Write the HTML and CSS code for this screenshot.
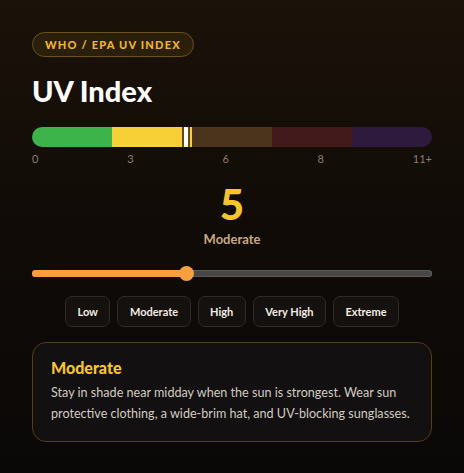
FILE: index.html
```html
<!DOCTYPE html>
<html lang="en">
<head>
    <meta charset="UTF-8">
    <meta name="viewport" content="width=device-width, initial-scale=1.0">
    <title>UV Index</title>
    <link rel="stylesheet" href="styles.css">
</head>
<body>
    <div class="panel">
        <span class="badge">WHO / EPA UV Index</span>
        <h1 class="title">UV Index</h1>

        <div class="scale">
            <div class="band low"></div>
            <div class="band moderate"></div>
            <div class="band high"></div>
            <div class="band veryHigh"></div>
            <div class="band extreme"></div>
            <div class="marker" style="left: 38.5%"></div>
        </div>
        <div class="ticks">
            <span>0</span>
            <span>3</span>
            <span>6</span>
            <span>8</span>
            <span>11+</span>
        </div>

        <div class="reading">
            <div class="value">5</div>
            <div class="level">Moderate</div>
        </div>

        <div class="slider">
            <div class="fill" style="width: 38.5%"></div>
            <div class="thumb" style="left: 38.5%"></div>
        </div>

        <div class="presets">
            <button class="preset">Low</button>
            <button class="preset">Moderate</button>
            <button class="preset">High</button>
            <button class="preset">Very High</button>
            <button class="preset">Extreme</button>
        </div>

        <div class="advice">
            <h2 class="adviceTitle">Moderate</h2>
            <p class="adviceText">Stay in shade near midday when the sun is strongest. Wear sun protective clothing, a wide-brim hat, and UV-blocking sunglasses.</p>
        </div>
    </div>
</body>
</html>
```

FILE: styles.css
```css
body {
    margin: 0;
    padding: 0;
    min-height: 100vh;
    font-family: 'Lato', 'Open Sans', sans-serif;
    background: linear-gradient(180deg, #1b1209 0%, #100b07 50%, #0a0807 100%);
    color: #f2ece4;
}

.panel {
    padding: 32px;
}

.badge {
    display: inline-block;
    height: 23px;
    line-height: 23px;
    padding: 0 12px;
    border: 1px solid #6a5218;
    border-radius: 13px;
    background-color: #2a1f0b;
    color: #f5b521;
    font-size: 11px;
    font-weight: 900;
    letter-spacing: 1.2px;
    text-transform: uppercase;
}

.title {
    margin: 16px 0 0;
    font-size: 29px;
    font-weight: 900;
    line-height: 36px;
    color: #ffffff;
}

.scale {
    position: relative;
    display: flex;
    height: 20px;
    margin-top: 18px;
    border-radius: 10px;
    overflow: hidden;
}

.band {
    flex: 1;
}

.low { background-color: #3cb44a; }
.moderate { background-color: #f7cf36; }
.high { background-color: #4b331c; }
.veryHigh { background-color: #421a1c; }
.extreme { background-color: #2e1a3c; }

.marker {
    position: absolute;
    top: 0;
    bottom: 0;
    width: 4px;
    margin-left: -2px;
    background-color: #ffffff;
    box-shadow: 0 0 0 2px rgba(30, 20, 5, 0.7);
}

.ticks {
    display: flex;
    justify-content: space-between;
    margin-top: 5px;
    font-size: 11px;
    color: #8a7d70;
}

.reading {
    margin-top: 18px;
    text-align: center;
}

.value {
    font-size: 42px;
    font-weight: 900;
    line-height: 42px;
    color: #f7c52a;
}

.level {
    margin-top: 6px;
    font-size: 13px;
    font-weight: 700;
    color: #c9a982;
}

.slider {
    position: relative;
    height: 7px;
    margin: 23px 0 0;
    border-radius: 4px;
    background-color: #494746;
    box-shadow: inset 0 0 0 1px #5c5a58;
}

.fill {
    height: 100%;
    border-radius: 4px;
    background-color: #f5a03c;
}

.thumb {
    position: absolute;
    top: 50%;
    width: 15px;
    height: 15px;
    margin: -7.5px 0 0 -7.5px;
    border-radius: 50%;
    background-color: #f5a03c;
}

.presets {
    display: flex;
    justify-content: center;
    gap: 7px;
    margin-top: 19px;
}

.preset {
    height: 31px;
    padding: 0 11.5px;
    border: 1px solid #2f2b27;
    border-radius: 7px;
    background-color: #15110f;
    color: #f2ece4;
    font-family: inherit;
    font-size: 11px;
    font-weight: 700;
    cursor: pointer;
}

.advice {
    margin-top: 15px;
    padding: 14px 18px 17px;
    border: 1px solid #4e3f14;
    border-radius: 14px;
    background-color: #121010;
}

.adviceTitle {
    margin: 0;
    font-size: 16px;
    font-weight: 900;
    line-height: 22px;
    color: #f7c52a;
}

.adviceText {
    margin: 3px 0 0;
    font-size: 12.6px;
    line-height: 21px;
    color: #d3cbc2;
}
```
